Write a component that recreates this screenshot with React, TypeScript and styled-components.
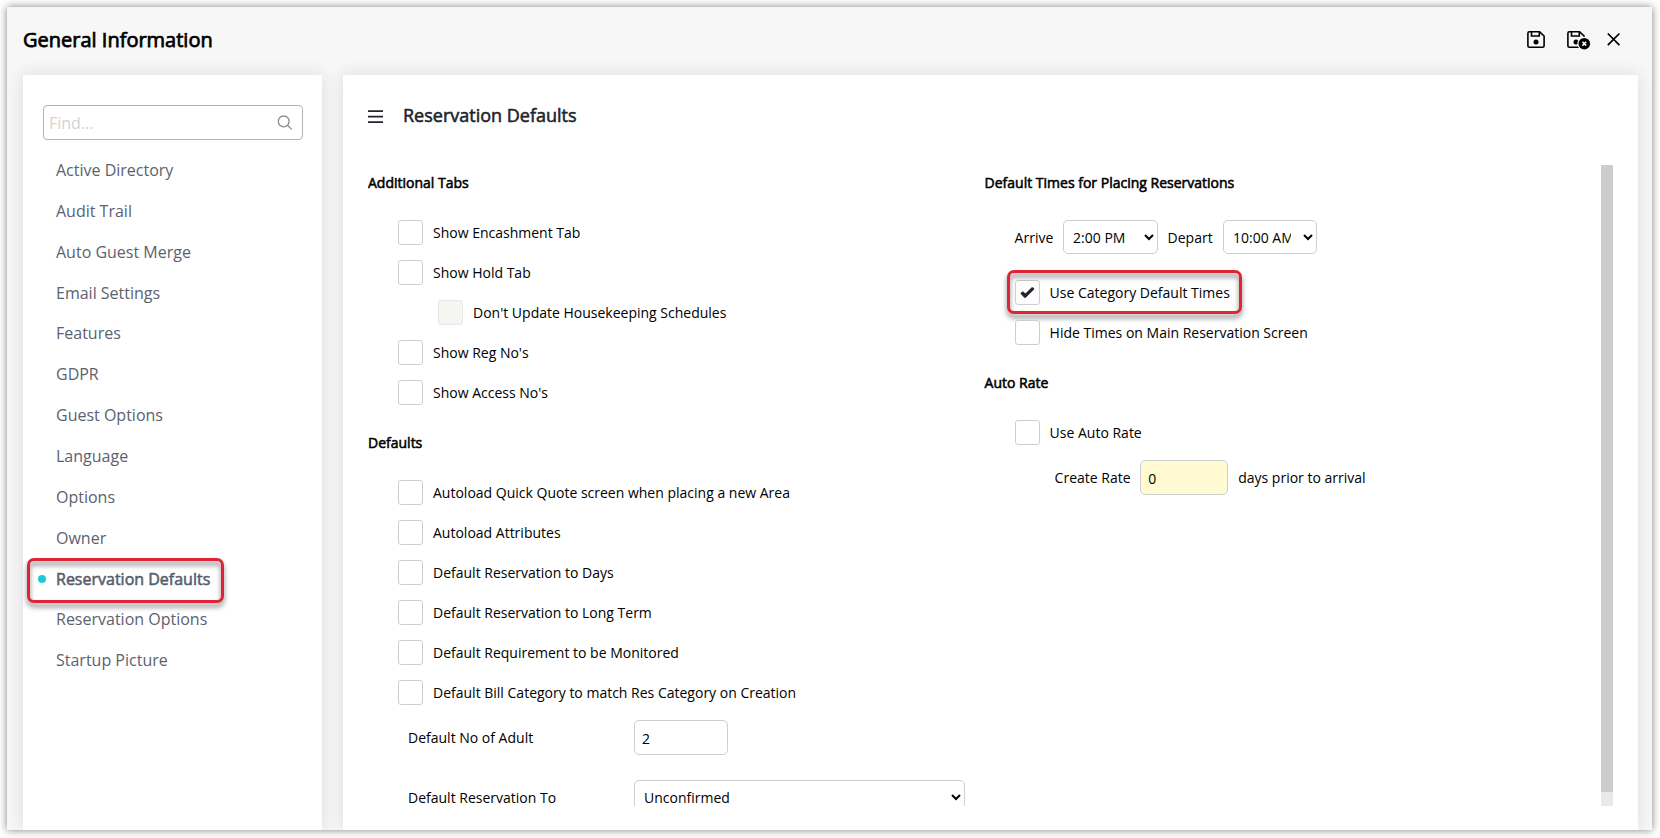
import React from 'react';
import styled, { createGlobalStyle, css } from 'styled-components';

const GlobalStyle = createGlobalStyle`
  *, *::before, *::after { box-sizing: border-box; }
  body {
    margin: 0;
    background: #fff;
    color: #000;
    font-family: 'Open Sans', 'Noto Sans', sans-serif;
    font-size: 14px;
    overflow: hidden;
  }
  input, select { font: inherit; color: #000; }
`;

const fauxBold = css`
  -webkit-text-stroke: 0.55px currentColor;
`;

const Page = styled.div`
  height: 838px;
  padding: 7px 8px 8px 7px;
`;

const Window = styled.main`
  height: 823px;
  display: flex;
  flex-direction: column;
  background: #f7f7f7;
  box-shadow: 0 0 8px rgba(0, 0, 0, 0.5);
`;

const TitleBar = styled.header`
  flex: none;
  height: 68px;
  padding: 0 32px 4px 16px;
  display: flex;
  align-items: center;
  justify-content: space-between;
`;

const WindowTitle = styled.h1`
  margin: 0;
  padding-top: 2px;
  font-size: 20px;
  font-weight: 400;
  line-height: 30px;
  ${fauxBold}
  -webkit-text-stroke-width: 0.75px;
`;

const Actions = styled.div`
  display: flex;
  align-items: center;
`;

const ActionButton = styled.button<{ $gap?: number }>`
  display: flex;
  padding: 0;
  margin-left: ${p => p.$gap ?? 0}px;
  border: 0;
  background: none;
  color: #000;
`;

const Body = styled.div`
  flex: 1;
  min-height: 0;
  display: flex;
  gap: 21px;
  padding: 20px 14px 0 16px;
  margin-top: -20px;
  overflow: hidden;
`;

const Panel = styled.section`
  background: #fff;
  box-shadow: 0 0 16px rgba(40, 40, 80, 0.13);
`;

const Sidebar = styled(Panel)`
  width: 299px;
  flex: none;
  padding: 30px 19px 0 20px;
`;

const SearchBox = styled.div`
  height: 35px;
  display: flex;
  align-items: center;
  padding: 0 10px 0 5px;
  border: 1px solid #b3b3b3;
  border-radius: 4px;
`;

const SearchInput = styled.input`
  flex: 1;
  min-width: 0;
  padding: 0;
  border: 0;
  outline: 0;
  background: none;
  font-size: 16px;
  &::placeholder { color: #d2d2d2; opacity: 1; }
`;

const NavList = styled.ul`
  list-style: none;
  margin: 10.1px 0 0;
  padding: 0;
`;

const NavItem = styled.li<{ $active?: boolean }>`
  position: relative;
  height: 40.83px;
  padding-left: 13px;
  line-height: 41px;
  font-size: 16px;
  color: #5b6270;
  ${p => p.$active && css`
    ${fauxBold}
    line-height: 43px;
    color: #585d6c;
    &::before {
      content: '';
      position: absolute;
      left: -5px;
      top: 16.6px;
      width: 8px;
      height: 8px;
      border-radius: 50%;
      background: #1ecbd3;
    }
  `}
`;

const Callout = styled.span<{ $x: number; $y: number; $w: number; $h: number }>`
  position: absolute;
  left: ${p => p.$x}px;
  top: ${p => p.$y}px;
  width: ${p => p.$w}px;
  height: ${p => p.$h}px;
  border: 3px solid #e22236;
  border-radius: 7px;
  filter: drop-shadow(0 4px 2.5px rgba(0, 0, 0, 0.5));
  pointer-events: none;
`;

const Content = styled(Panel)`
  flex: 1;
  min-width: 0;
  padding: 23px 25px 0;
`;

const ContentHeader = styled.div`
  height: 37px;
  display: flex;
  align-items: center;
  gap: 20px;
  margin-bottom: 30px;
`;

const ContentTitle = styled.h2`
  margin: 0;
  padding-bottom: 2px;
  font-size: 18px;
  font-weight: 400;
  line-height: 35px;
  color: #20242c;
  ${fauxBold}
`;

const ScrollArea = styled.div`
  height: 641px;
  display: flex;
  overflow: hidden;
`;

const Column = styled.div<{ $width?: number }>`
  flex: ${p => (p.$width ? `0 0 ${p.$width}px` : '1')};
`;

const ScrollTrack = styled.div`
  width: 12px;
  background: #e9e9e9;
`;

const ScrollThumb = styled.div`
  height: 627px;
  background: #cdcdcd;
`;

const SectionTitle = styled.h3`
  margin: 0 0 20px;
  height: 35px;
  font-size: 14px;
  font-weight: 400;
  line-height: 36px;
  ${fauxBold}
`;

const Section = styled.div`
  padding-bottom: 5px;
`;

const CheckRow = styled.label<{ $indent?: number }>`
  position: relative;
  display: flex;
  align-items: center;
  gap: 10px;
  height: 25px;
  margin: 0 0 15px ${p => p.$indent ?? 30}px;
  line-height: 25px;
`;

const Box = styled.span<{ $disabled?: boolean }>`
  width: 25px;
  height: 25px;
  display: flex;
  align-items: center;
  justify-content: center;
  border: 1px solid ${p => (p.$disabled ? '#e8e8e6' : '#cecece')};
  border-radius: 3px;
  background: ${p => (p.$disabled ? '#f5f5f1' : '#fff')};
`;

const FieldRow = styled.div<{ $indent: number; $top?: boolean }>`
  display: flex;
  align-items: ${p => (p.$top ? 'flex-start' : 'center')};
  height: 35px;
  margin: 0 0 25px ${p => p.$indent}px;
`;

const FieldLabel = styled.label<{ $width?: number; $left?: number }>`
  width: ${p => (p.$width ? `${p.$width}px` : 'auto')};
  margin-left: ${p => p.$left ?? 0}px;
  line-height: 35px;
`;

const TextField = styled.input<{ $width: number; $tint?: boolean }>`
  width: ${p => p.$width}px;
  height: 35px;
  padding: 1px 7px 0 ${p => (p.$tint ? 7.6 : 7)}px;
  border: 1px solid #cecece;
  border-radius: 5px;
  background: ${p => (p.$tint ? '#fffad2' : '#fff')};
`;

const Select = styled.select<{ $width: number; $height?: number; $left?: number; $right?: number }>`
  width: ${p => p.$width}px;
  height: ${p => p.$height ?? 34}px;
  padding: 0 ${p => p.$right ?? 0}px 0 ${p => p.$left ?? 5}px;
  border: 1px solid #cecece;
  border-radius: 5px;
  background: #fff;
`;

const SaveIcon = () => (
  <svg width="18" height="18" viewBox="0 0 18 18" fill="none" stroke="currentColor" strokeWidth="1.6">
    <path d="M2.3 1.8H12.6L17.1 6V15.8Q17.1 17.2 15.7 17.2H2.3Q0.9 17.2 0.9 15.8V3.2Q0.9 1.8 2.3 1.8Z" />
    <path d="M4.5 1.8V6H12.3V1.8" />
    <circle cx="9" cy="12" r="2.5" fill="currentColor" stroke="none" />
  </svg>
);

const SaveCloseIcon = () => (
  <svg width="24" height="18" viewBox="0 0 24 18" fill="none" stroke="currentColor" strokeWidth="1.6" overflow="visible">
    <path d="M12.5 17.2H2.3Q0.9 17.2 0.9 15.8V3.2Q0.9 1.8 2.3 1.8H12.6L17.1 6V8" />
    <path d="M4.5 1.8V6H12.3V1.8" />
    <circle cx="9" cy="12" r="2.5" fill="currentColor" stroke="none" />
    <circle cx="17.3" cy="13.7" r="7" fill="#f7f7f7" stroke="none" />
    <circle cx="17.3" cy="13.7" r="5.8" fill="currentColor" stroke="none" />
    <path d="M15.4 11.8L19.2 15.6M19.2 11.8L15.4 15.6" stroke="#fff" strokeWidth="1.5" />
  </svg>
);

const CloseIcon = () => (
  <svg width="13" height="14" viewBox="0 0 13 14" fill="none" stroke="currentColor" strokeWidth="1.7">
    <path d="M0.8 1.5L12.4 13.1M12.4 1.5L0.8 13.1" />
  </svg>
);

const SearchIcon = () => (
  <svg width="15" height="15" viewBox="0 0 15 15" fill="none" stroke="#8c8c8c" strokeWidth="1.3">
    <circle cx="6.7" cy="6.4" r="5.4" />
    <path d="M10.5 10.3L14.7 14.4" />
  </svg>
);

const MenuIcon = () => (
  <svg width="15" height="14" viewBox="0 0 15 14" fill="#20242c">
    <path d="M0 0.3H15V2.1H0ZM0 5.8H15V7.6H0ZM0 11.3H15V13.1H0Z" />
  </svg>
);

const CheckIcon = () => (
  <svg width="15" height="13" viewBox="0 0 15 13" fill="#20242c">
    <path d="M0.3 7.6L2.8 5.2L5.4 7.5L11.8 1.3Q12.6 0.9 13.2 1.5L14.5 2.9L5.9 11.6Q5 12.5 4.1 11.6Z" />
  </svg>
);

const navItems = [
  'Active Directory', 'Audit Trail', 'Auto Guest Merge', 'Email Settings', 'Features', 'GDPR',
  'Guest Options', 'Language', 'Options', 'Owner', 'Reservation Defaults', 'Reservation Options',
  'Startup Picture',
];

type CheckProps = {
  label: string;
  indent?: number;
  checked?: boolean;
  disabled?: boolean;
  children?: React.ReactNode;
};

const Check = ({ label, indent, checked, disabled, children }: CheckProps) => (
  <CheckRow $indent={indent}>
    <Box $disabled={disabled}>{checked && <CheckIcon />}</Box>
    <span>{label}</span>
    {children}
  </CheckRow>
);

export default function App() {
  return (
    <Page>
      <GlobalStyle />
      <Window>
        <TitleBar>
          <WindowTitle>General Information</WindowTitle>
          <Actions>
            <ActionButton aria-label="Save"><SaveIcon /></ActionButton>
            <ActionButton aria-label="Save and close" $gap={22}><SaveCloseIcon /></ActionButton>
            <ActionButton aria-label="Close" $gap={16}><CloseIcon /></ActionButton>
          </Actions>
        </TitleBar>
        <Body>
          <Sidebar>
            <SearchBox>
              <SearchInput placeholder="Find..." />
              <SearchIcon />
            </SearchBox>
            <NavList>
              {navItems.map(item => {
                const active = item === 'Reservation Defaults';
                return (
                  <NavItem key={item} $active={active}>
                    {item}
                    {active && <Callout $x={-16} $y={-0.4} $w={197} $h={45} />}
                  </NavItem>
                );
              })}
            </NavList>
          </Sidebar>
          <Content>
            <ContentHeader>
              <MenuIcon />
              <ContentTitle>Reservation Defaults</ContentTitle>
            </ContentHeader>
            <ScrollArea>
              <Column $width={616.6}>
                <Section>
                  <SectionTitle>Additional Tabs</SectionTitle>
                  <Check label="Show Encashment Tab" />
                  <Check label="Show Hold Tab" />
                  <Check label="Don't Update Housekeeping Schedules" indent={70} disabled />
                  <Check label="Show Reg No's" />
                  <Check label="Show Access No's" />
                </Section>
                <Section>
                  <SectionTitle>Defaults</SectionTitle>
                  <Check label="Autoload Quick Quote screen when placing a new Area" />
                  <Check label="Autoload Attributes" />
                  <Check label="Default Reservation to Days" />
                  <Check label="Default Reservation to Long Term" />
                  <Check label="Default Requirement to be Monitored" />
                  <Check label="Default Bill Category to match Res Category on Creation" />
                  <FieldRow $indent={40}>
                    <FieldLabel $width={226}>Default No of Adult</FieldLabel>
                    <TextField $width={94} defaultValue="2" />
                  </FieldRow>
                  <FieldRow $indent={40}>
                    <FieldLabel $width={226}>Default Reservation To</FieldLabel>
                    <Select $width={331} $height={35}>
                      <option>Unconfirmed</option>
                    </Select>
                  </FieldRow>
                </Section>
              </Column>
              <Column>
                <Section>
                  <SectionTitle>Default Times for Placing Reservations</SectionTitle>
                  <FieldRow $indent={30} $top>
                    <FieldLabel $width={48}>Arrive</FieldLabel>
                    <Select $width={95} $left={5.5}><option>2:00 PM</option></Select>
                    <FieldLabel $width={55.4} $left={10}>Depart</FieldLabel>
                    <Select $width={94} $right={9}><option>10:00 AM</option></Select>
                  </FieldRow>
                  <Check label="Use Category Default Times" checked>
                    <Callout $x={-8} $y={-10} $w={235} $h={44} />
                  </Check>
                  <Check label="Hide Times on Main Reservation Screen" />
                </Section>
                <Section>
                  <SectionTitle>Auto Rate</SectionTitle>
                  <Check label="Use Auto Rate" />
                  <FieldRow $indent={70}>
                    <FieldLabel $width={85}>Create Rate</FieldLabel>
                    <TextField $width={88} $tint defaultValue="0" />
                    <FieldLabel $left={10.6}>days prior to arrival</FieldLabel>
                  </FieldRow>
                </Section>
              </Column>
              <ScrollTrack><ScrollThumb /></ScrollTrack>
            </ScrollArea>
          </Content>
        </Body>
      </Window>
    </Page>
  );
}
